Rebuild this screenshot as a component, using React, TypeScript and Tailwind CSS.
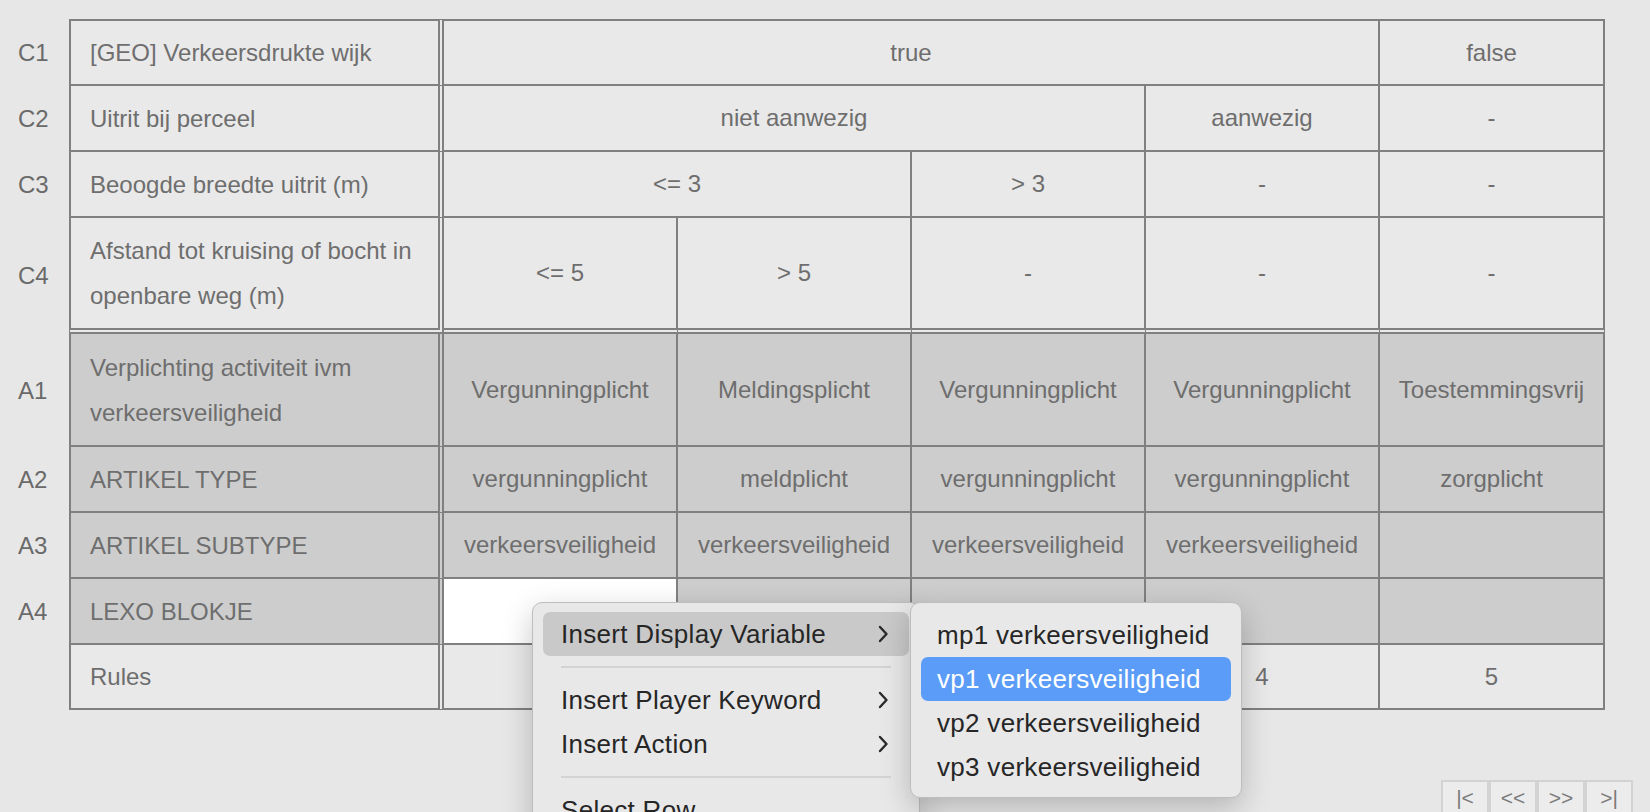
import React from "react";

type CellDef = { t: string; span?: number; white?: boolean };
type RowDef = {
  id: string;
  label: React.ReactNode;
  cells: CellDef[];
  action?: boolean;
  first?: boolean;
  sep?: boolean;
  noId?: boolean;
};

const spanClass: Record<number, string> = {
  1: "col-span-1",
  2: "col-span-2",
  3: "col-span-3",
  4: "col-span-4",
};

const rows: RowDef[] = [
  {
    id: "C1",
    label: "[GEO] Verkeersdrukte wijk",
    cells: [{ t: "true", span: 4 }, { t: "false" }],
    first: true,
  },
  {
    id: "C2",
    label: "Uitrit bij perceel",
    cells: [{ t: "niet aanwezig", span: 3 }, { t: "aanwezig" }, { t: "-" }],
  },
  {
    id: "C3",
    label: "Beoogde breedte uitrit (m)",
    cells: [{ t: "<= 3", span: 2 }, { t: "> 3" }, { t: "-" }, { t: "-" }],
  },
  {
    id: "C4",
    label: (
      <>
        Afstand tot kruising of bocht in
        <br />
        openbare weg (m)
      </>
    ),
    cells: [{ t: "<= 5" }, { t: "> 5" }, { t: "-" }, { t: "-" }, { t: "-" }],
    sep: true,
  },
  {
    id: "A1",
    label: (
      <>
        Verplichting activiteit ivm
        <br />
        verkeersveiligheid
      </>
    ),
    cells: [
      { t: "Vergunningplicht" },
      { t: "Meldingsplicht" },
      { t: "Vergunningplicht" },
      { t: "Vergunningplicht" },
      { t: "Toestemmingsvrij" },
    ],
    action: true,
  },
  {
    id: "A2",
    label: "ARTIKEL TYPE",
    cells: [
      { t: "vergunningplicht" },
      { t: "meldplicht" },
      { t: "vergunningplicht" },
      { t: "vergunningplicht" },
      { t: "zorgplicht" },
    ],
    action: true,
  },
  {
    id: "A3",
    label: "ARTIKEL SUBTYPE",
    cells: [
      { t: "verkeersveiligheid" },
      { t: "verkeersveiligheid" },
      { t: "verkeersveiligheid" },
      { t: "verkeersveiligheid" },
      { t: "" },
    ],
    action: true,
  },
  {
    id: "A4",
    label: "LEXO BLOKJE",
    cells: [{ t: "", white: true }, { t: "" }, { t: "" }, { t: "" }, { t: "" }],
    action: true,
  },
  {
    id: "",
    label: "Rules",
    cells: [{ t: "1" }, { t: "2" }, { t: "3" }, { t: "4" }, { t: "5" }],
    noId: true,
  },
];

function Chevron() {
  return (
    <svg width="12" height="18" viewBox="0 0 12 18" fill="none">
      <polyline
        points="3,2 9.5,9 3,16"
        stroke="#2a2a2a"
        strokeWidth="2.4"
        strokeLinecap="round"
        strokeLinejoin="round"
      />
    </svg>
  );
}

export default function App() {
  return (
    <div className="relative w-[1650px] h-[812px] overflow-hidden bg-[#e7e7e7] font-['Liberation_Sans',Arial,sans-serif]">
      <div className="pt-[19px]">
        <div className="grid grid-cols-[69px_375px_234px_234px_234px_234px_225px] grid-rows-[67px_66px_66px_116px_113px_66px_66px_66px_65px] text-[24px] text-[#6e6e6e]">
          {rows.map((r, ri) => {
            const rowBorder = `${r.first ? "border-t-2" : ""} ${
              r.sep ? "border-b-[6px] border-double" : "border-b-2"
            }`;
            const bg = r.action ? "bg-[#cdcdcd]" : "bg-[#e9e9e9]";
            return (
              <React.Fragment key={ri}>
                <div className="flex items-center pl-[18px] text-[#6a6a6a]">
                  {r.noId ? "" : r.id}
                </div>
                <div
                  className={`flex items-center pl-[19px] leading-[45px] border-l-2 border-r-[6px] border-double border-[#808080] ${rowBorder} ${bg}`}
                >
                  <span>{r.label}</span>
                </div>
                {r.cells.map((c, ci) => (
                  <div
                    key={ci}
                    className={`${spanClass[c.span ?? 1]} flex items-center justify-center whitespace-nowrap border-r-2 border-[#808080] ${rowBorder} ${
                      c.white ? "bg-white" : bg
                    }`}
                  >
                    {c.t}
                  </div>
                ))}
              </React.Fragment>
            );
          })}
        </div>
        <div className="flex justify-end pr-[17px] mt-[70px]">
          {["|<", "<<", ">>", ">|"].map((t) => (
            <div
              key={t}
              className="w-[48px] h-[36px] flex items-center justify-center border-2 border-[#d3d3d3] bg-[#ececec] text-[21px] text-[#7a7a7a]"
            >
              {t}
            </div>
          ))}
        </div>
      </div>

      {/* Context menu */}
      <div className="absolute left-[532px] top-[602px] w-[388px] h-[260px] rounded-[10px] bg-[#e8e8e8] border border-[#bdbdbd] shadow-[0_10px_30px_rgba(0,0,0,0.22)] px-[10px] pt-[9px] text-[26px] tracking-[0.3px] text-[#262626]">
        <div className="h-[44px] rounded-[7px] bg-[#c9c9c9] flex items-center justify-between pl-[18px] pr-[20px]">
          <span>Insert Display Variable</span>
          <Chevron />
        </div>
        <div className="h-[22px] flex items-center mx-[18px]">
          <div className="h-[2px] w-full bg-[#d3d3d3]" />
        </div>
        <div className="h-[44px] flex items-center justify-between pl-[18px] pr-[20px]">
          <span>Insert Player Keyword</span>
          <Chevron />
        </div>
        <div className="h-[44px] flex items-center justify-between pl-[18px] pr-[20px]">
          <span>Insert Action</span>
          <Chevron />
        </div>
        <div className="h-[22px] flex items-center mx-[18px]">
          <div className="h-[2px] w-full bg-[#d3d3d3]" />
        </div>
        <div className="h-[44px] flex items-center pl-[18px]">
          <span>Select Row</span>
        </div>
        <div className="h-[44px] flex items-center pl-[18px]">
          <span>Select Column</span>
        </div>
      </div>

      {/* Submenu */}
      <div className="absolute left-[910px] top-[602px] w-[332px] h-[196px] rounded-[10px] bg-[#e8e8e8] border border-[#bdbdbd] shadow-[0_10px_30px_rgba(0,0,0,0.22)] px-[10px] pt-[10px] text-[26px] tracking-[0.3px] text-[#262626]">
        <div className="h-[44px] flex items-center pl-[16px]">mp1 verkeersveiligheid</div>
        <div className="h-[44px] flex items-center pl-[16px] rounded-[7px] bg-[#5a9cf7] text-white">
          vp1 verkeersveiligheid
        </div>
        <div className="h-[44px] flex items-center pl-[16px]">vp2 verkeersveiligheid</div>
        <div className="h-[44px] flex items-center pl-[16px]">vp3 verkeersveiligheid</div>
      </div>
    </div>
  );
}
